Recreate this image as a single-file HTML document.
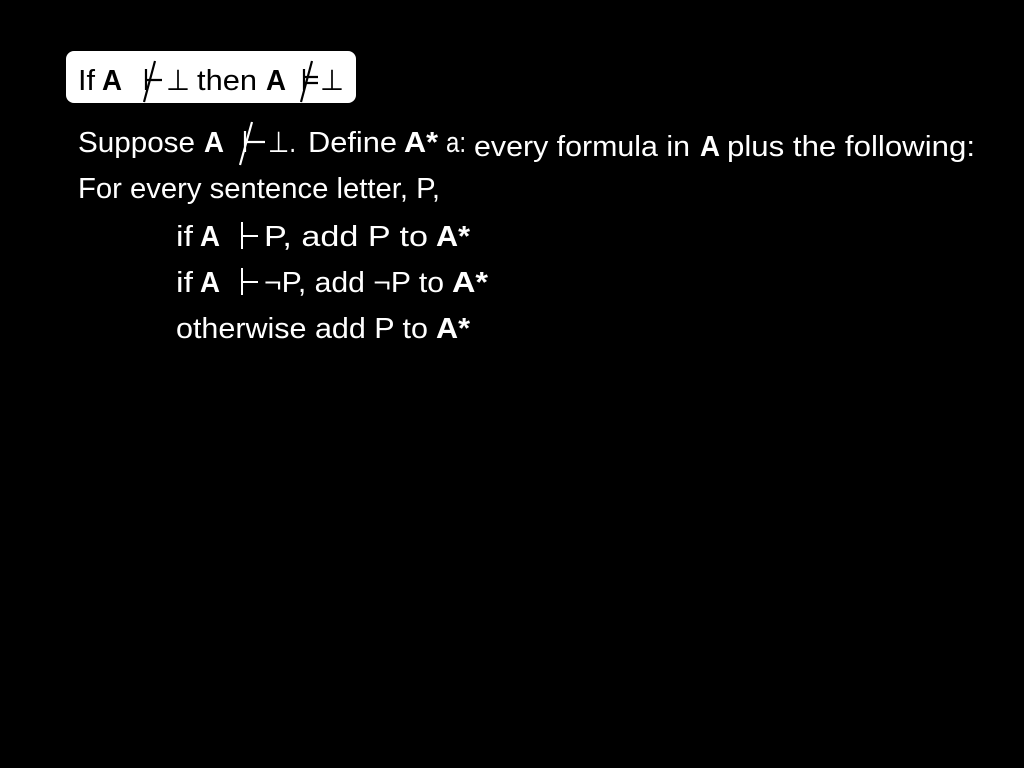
<!DOCTYPE html>
<html><head><meta charset="utf-8"><style>
html,body{margin:0;padding:0;background:#000;width:1024px;height:768px;overflow:hidden}
svg{display:block}
text{font-family:"Liberation Sans",sans-serif;font-size:29px;fill:#fff}
.b{font-weight:bold}
.k{fill:#000}
</style></head><body>
<svg width="1024" height="768" viewBox="0 0 1024 768">
<rect x="0" y="0" width="1024" height="768" fill="#000"/>
<rect x="66" y="51" width="290" height="52" rx="8" fill="#fff"/>
<g class="k">
<text class="k" x="78" y="90" textLength="17" lengthAdjust="spacingAndGlyphs">If</text>
<text class="k b" x="102" y="90" textLength="20" lengthAdjust="spacingAndGlyphs">A</text>
<text class="k" x="166" y="90" textLength="24" lengthAdjust="spacingAndGlyphs">⊥</text>
<text class="k" x="197" y="90" textLength="60" lengthAdjust="spacingAndGlyphs">then</text>
<text class="k b" x="266" y="90" textLength="20" lengthAdjust="spacingAndGlyphs">A</text>
<text class="k" x="320" y="90" textLength="24" lengthAdjust="spacingAndGlyphs">⊥</text>
</g>
<g stroke="#000" stroke-width="2.2" fill="none">
<path d="M146 69V90M146 80H162M155 61L144 102"/>
<path d="M304 69V90M304 77H318M304 83H318M312 61L301 102"/>
</g>
<text x="78" y="152" textLength="117" lengthAdjust="spacingAndGlyphs">Suppose</text>
<text class="b" x="204" y="152" textLength="20" lengthAdjust="spacingAndGlyphs">A</text>
<text x="268" y="152" textLength="28" lengthAdjust="spacingAndGlyphs">⊥.</text>
<text x="308" y="152" textLength="89" lengthAdjust="spacingAndGlyphs">Define</text>
<text class="b" x="404" y="152" textLength="34" lengthAdjust="spacingAndGlyphs">A*</text>
<text x="446" y="152" textLength="20" lengthAdjust="spacingAndGlyphs">a:</text>
<g stroke="#fff" stroke-width="2.2" fill="none">
<path d="M245 131V152M245 142H265M252 122L240 165"/>
</g>
<text x="474" y="156" textLength="216" lengthAdjust="spacingAndGlyphs">every formula in</text>
<text class="b" x="700" y="156" textLength="20" lengthAdjust="spacingAndGlyphs">A</text>
<text x="727" y="156" textLength="248" lengthAdjust="spacingAndGlyphs">plus the following:</text>
<text x="78" y="198" textLength="362" lengthAdjust="spacingAndGlyphs">For every sentence letter, P,</text>
<text x="176" y="246" textLength="17" lengthAdjust="spacingAndGlyphs">if</text>
<text class="b" x="200" y="246" textLength="20" lengthAdjust="spacingAndGlyphs">A</text>
<text x="264" y="246" textLength="164" lengthAdjust="spacingAndGlyphs">P, add P to</text>
<text class="b" x="436" y="246" textLength="34" lengthAdjust="spacingAndGlyphs">A*</text>
<text x="176" y="292" textLength="17" lengthAdjust="spacingAndGlyphs">if</text>
<text class="b" x="200" y="292" textLength="20" lengthAdjust="spacingAndGlyphs">A</text>
<text x="264" y="292" textLength="180" lengthAdjust="spacingAndGlyphs">¬P, add ¬P to</text>
<text class="b" x="452" y="292" textLength="36" lengthAdjust="spacingAndGlyphs">A*</text>
<text x="176" y="338" textLength="252" lengthAdjust="spacingAndGlyphs">otherwise add P to</text>
<text class="b" x="436" y="338" textLength="34" lengthAdjust="spacingAndGlyphs">A*</text>
<g stroke="#fff" stroke-width="2" fill="none">
<path d="M242 222V249M242 236H258"/>
<path d="M242 268V295M242 282H258"/>
</g>
</svg>
</body></html>
